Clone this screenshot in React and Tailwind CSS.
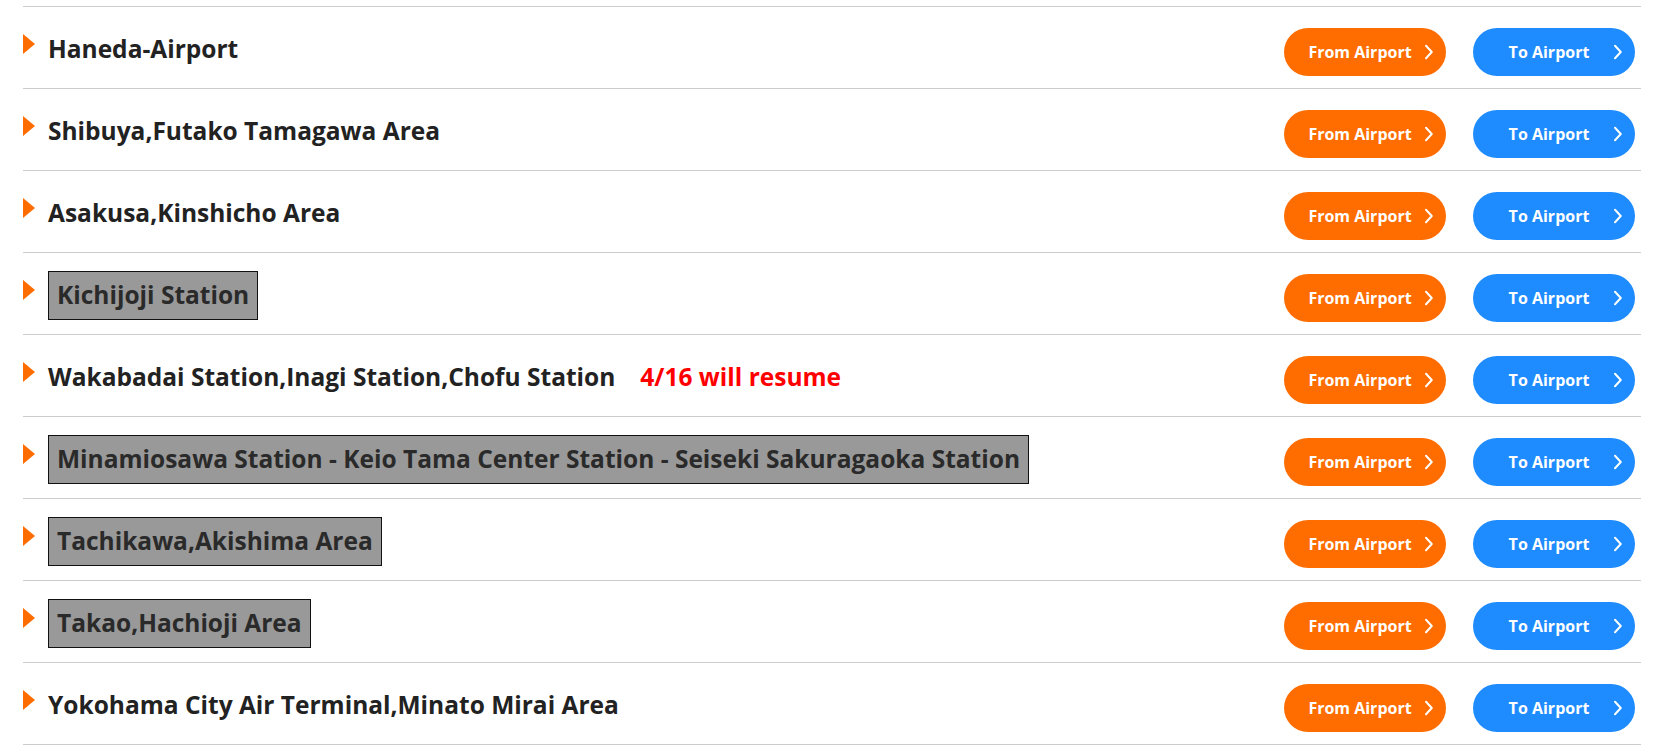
import React from "react";

const routes = [
  { title: "Haneda-Airport" },
  { title: "Shibuya,Futako Tamagawa Area" },
  { title: "Asakusa,Kinshicho Area" },
  { title: "Kichijoji Station", boxed: true },
  { title: "Wakabadai Station,Inagi Station,Chofu Station", note: "4/16 will resume" },
  { title: "Minamiosawa Station - Keio Tama Center Station - Seiseki Sakuragaoka Station", boxed: true },
  { title: "Tachikawa,Akishima Area", boxed: true },
  { title: "Takao,Hachioji Area", boxed: true },
  { title: "Yokohama City Air Terminal,Minato Mirai Area" },
];

function Chevron() {
  return (
    <svg
      className="absolute right-[12px] top-1/2 -translate-y-1/2"
      width="10"
      height="16"
      viewBox="0 0 10 16"
      fill="none"
    >
      <path d="M2 1.8L7.8 8L2 14.2" stroke="white" strokeWidth="2" strokeLinecap="round" strokeLinejoin="round" />
    </svg>
  );
}

function RouteButton({ label, color }) {
  return (
    <a
      href="#"
      className={`relative flex h-12 w-[162px] items-center justify-center rounded-full text-[16px] font-bold text-white ${color}`}
    >
      <span className="pr-[10px]">{label}</span>
      <Chevron />
    </a>
  );
}

function RouteRow({ title, boxed, note }) {
  return (
    <li className="flex h-[82px] items-start justify-between border-b border-[#cccccc] pt-[21px]">
      <div className="flex items-start">
        <span className="mt-[6px] h-0 w-0 border-y-[10px] border-l-[12px] border-y-transparent border-l-[#ff6d00]" />
        <div className="ml-[13px] flex h-[42px] items-center">
          {boxed ? (
            <span className="flex h-[49px] items-center border border-[#111] bg-[#999999] px-[8px] text-[24.5px] font-bold text-[#2a2a2a]">
              {title}
            </span>
          ) : (
            <span className="text-[24.5px] font-bold text-[#222]">{title}</span>
          )}
          {note && (
            <span className="ml-[25px] text-[24.5px] font-bold text-[#ff0000]">{note}</span>
          )}
        </div>
      </div>
      <div className="flex gap-[27px] pr-[6px]">
        <RouteButton label="From Airport" color="bg-[#ff6d00]" />
        <RouteButton label="To Airport" color="bg-[#1e8bff]" />
      </div>
    </li>
  );
}

export default function App() {
  return (
    <div
      className="min-h-screen bg-white pl-[23px] pr-[18px] pt-[6px]"
      style={{ fontFamily: '"Open Sans", "Noto Sans", sans-serif' }}
    >
      <ul className="border-t border-[#cccccc]">
        {routes.map((r) => (
          <RouteRow key={r.title} {...r} />
        ))}
      </ul>
    </div>
  );
}
